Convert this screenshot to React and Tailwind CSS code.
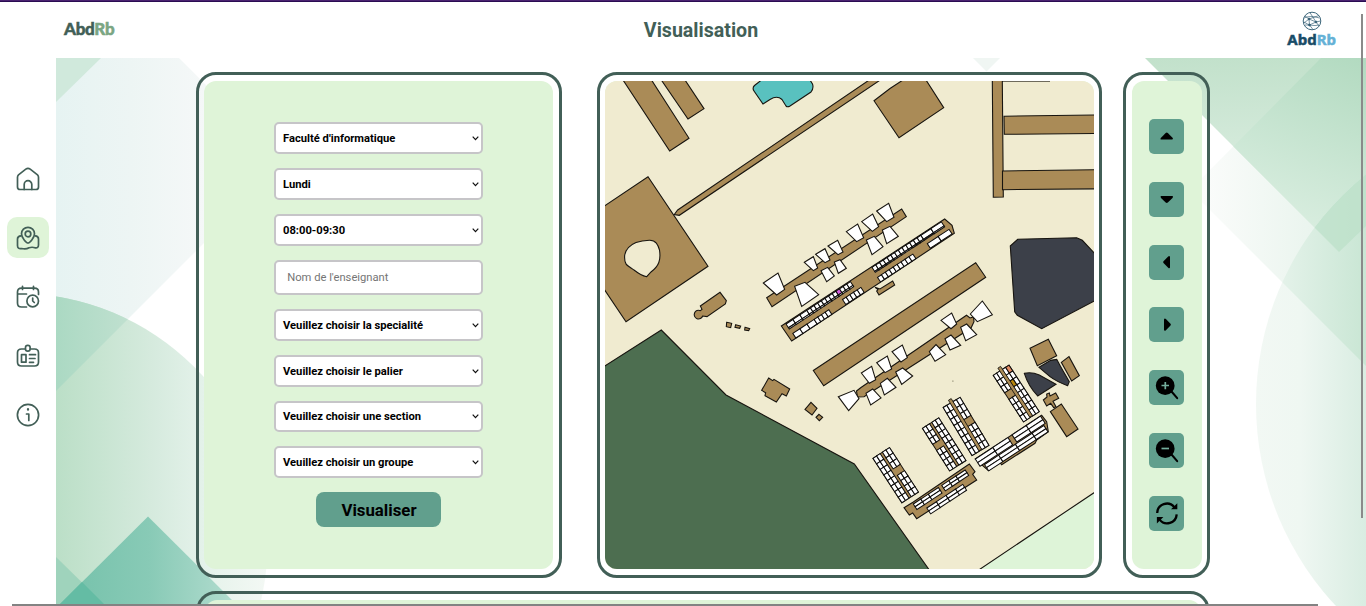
import React from "react";

const BROWN = "#aa8b57";
const INK = "#17140f";

/* ---------- Page backdrop ---------- */
function Backdrop() {
  return (
    <svg className="absolute inset-0 h-full w-full" viewBox="56 58 1310 548" preserveAspectRatio="none">
      <defs>
        <linearGradient id="hex" gradientUnits="userSpaceOnUse" x1="56" x2="205" y1="0" y2="0">
          <stop offset="0" stopColor="#e6f3f2" />
          <stop offset="0.5" stopColor="#edf5f4" />
          <stop offset="1" stopColor="#f5f8f8" />
        </linearGradient>
        <linearGradient id="disc" gradientUnits="userSpaceOnUse" x1="56" x2="266" y1="0" y2="0">
          <stop offset="0" stopColor="#bbdfc7" />
          <stop offset="0.45" stopColor="#d5eadd" />
          <stop offset="0.7" stopColor="#e4f2ea" />
          <stop offset="1" stopColor="#f3f8f4" />
        </linearGradient>
        <linearGradient id="discHex" gradientUnits="userSpaceOnUse" x1="56" x2="126" y1="0" y2="0">
          <stop offset="0" stopColor="#abd9c3" />
          <stop offset="1" stopColor="#bfe0cf" />
        </linearGradient>
        <linearGradient id="peak" gradientUnits="userSpaceOnUse" x1="60" x2="238" y1="0" y2="0">
          <stop offset="0" stopColor="#74c1aa" />
          <stop offset="0.5" stopColor="#88cab6" />
          <stop offset="1" stopColor="#b4ddd0" />
        </linearGradient>
        <linearGradient id="roof" gradientUnits="userSpaceOnUse" x1="0" x2="0" y1="58" y2="252">
          <stop offset="0" stopColor="#c2e1cb" />
          <stop offset="1" stopColor="#e8f4ec" />
        </linearGradient>
        <linearGradient id="roofDark" gradientUnits="userSpaceOnUse" x1="1366" x2="1290" y1="58" y2="240">
          <stop offset="0" stopColor="#b2dac0" />
          <stop offset="1" stopColor="#dcefe2" />
        </linearGradient>
        <linearGradient id="diamond" gradientUnits="userSpaceOnUse" x1="1202" x2="1366" y1="0" y2="0">
          <stop offset="0" stopColor="#fbfcfb" />
          <stop offset="1" stopColor="#e2f1e8" />
        </linearGradient>
        <linearGradient id="moon" gradientUnits="userSpaceOnUse" x1="1256" x2="1366" y1="0" y2="0">
          <stop offset="0" stopColor="#f2f8f4" />
          <stop offset="0.4" stopColor="#eff7f2" />
          <stop offset="1" stopColor="#d9ede2" />
        </linearGradient>
        <linearGradient id="moonDark" gradientUnits="userSpaceOnUse" x1="1275" x2="1366" y1="0" y2="0">
          <stop offset="0" stopColor="#e6f3eb" />
          <stop offset="1" stopColor="#c9e6d4" />
        </linearGradient>
        <clipPath id="hexClip"><path d="M56 58H179L264 143V183L56 391Z" /></clipPath>
        <clipPath id="roofClip"><path d="M1145 58L1339 252L1366 226V58Z" /></clipPath>
        <clipPath id="diamondClip"><path d="M1321 58H1366V366L1202 202V178Z" /></clipPath>
      </defs>
      <path fill="url(#hex)" d="M56 58H179L264 143V183L56 391Z" />
      <path fill="#d0e9dc" d="M56 58H101L56 102Z" />
      <circle fill="url(#disc)" cx="17" cy="544" r="250.5" />
      <circle fill="url(#discHex)" cx="17" cy="544" r="250.5" clipPath="url(#hexClip)" />
      <path fill="#9fd3bc" d="M56 557L106 606H56Z" />
      <path fill="url(#peak)" d="M148 516.500L238 606H58Z" />
      <path fill="#64bca4" d="M82 582L106 606H58Z" />
      <path fill="#f0f6f3" d="M973 58H1000L986.500 71.500Z" />
      <path fill="url(#diamond)" d="M1321 58H1366V366L1202 202V178Z" />
      <path fill="url(#roof)" d="M1145 58L1339 252L1366 226V58Z" />
      <path fill="url(#roofDark)" d="M1321 58H1366V366L1202 202V178Z" clipPath="url(#roofClip)" />
      <circle fill="url(#moon)" cx="1551" cy="404" r="295" />
      <circle fill="url(#moonDark)" cx="1551" cy="404" r="295" clipPath="url(#diamondClip)" />
      <g clipPath="url(#roofClip)">
        <circle fill="#bbdfc8" fillOpacity="0.7" cx="1551" cy="404" r="295" />
      </g>
    </svg>
  );
}

/* ---------- Campus map ---------- */
/* A run of rooms, laid along a building that is turned by `angle`. `widths` lists room widths; a negative one is a gap. */
function Rooms({ x, y, angle = -33.3, widths, heights, marks = {} }) {
  const cells = [];
  let cy = 0;
  heights.forEach((h, r) => {
    if (h < 0) {
      cy -= h;
      return;
    }
    let cx = 0;
    widths.forEach((w, c) => {
      if (w < 0) {
        cx -= w;
        return;
      }
      cells.push(
        <rect key={r + "-" + c} x={cx} y={cy} width={w} height={h} fill={marks[r + "-" + c] || "#fff"} />
      );
      cx += w;
    });
    cy += h;
  });
  return (
    <g transform={`translate(${x} ${y}) rotate(${angle})`} stroke="#0c0b0a" strokeWidth="1">
      {cells}
    </g>
  );
}

const rep = (n, v) => Array(n).fill(v);

function Wing({ x, y, w, h, angle, gapSide, gapAt, stair, marks }) {
  const cw = (w - 2.600) / 4;
  const n = 8;
  const rh = h / n;
  const full = rep(n, rh);
  const gapped = [...rep(gapAt, rh), -rh * 1.150, ...rep(n - gapAt - 1, (h - rh * (gapAt + 1.150)) / (n - gapAt - 1))];
  const a = (angle * Math.PI) / 180;
  const off = cw * 2 + 2.600;
  return (
    <g>
      <rect
        transform={`translate(${x} ${y}) rotate(${angle})`}
        width={w}
        height={h}
        fill={BROWN}
        stroke={INK}
      />
      <Rooms x={x} y={y} angle={angle} widths={[cw, cw]} heights={gapSide === "left" ? gapped : full} />
      <Rooms
        x={x + Math.cos(a) * off}
        y={y + Math.sin(a) * off}
        angle={angle}
        widths={[cw, cw]}
        heights={gapSide === "right" ? gapped : full}
        marks={marks}
      />
      {stair && (
        <rect
          transform={`translate(${x} ${y}) rotate(${angle})`}
          x={cw * 2 - 0.300}
          y={-3.500}
          width={3.200}
          height={h + 3}
          fill={BROWN}
          stroke={INK}
          strokeWidth="0.8"
        />
      )}
    </g>
  );
}

/* Outlines traced on a sheet at three times the map's size. */
const sheetA = [
  "40,279 84,249 104,298 80,315",
  "163,217 190,200 203,234 190,242",
  "197,193 225,176 240,210 225,218",
  "234,168 263,151 279,186 264,194",
  "289,125 323,102 341,143 320,155",
  "335,95 368,72 386,110 367,124",
  "380,63 416,40 432,82 410,95",
  "134,289 165,277 206,314 155,349",
  "213,242 233,232 253,258 230,275",
  "253,216 270,209 289,235 265,250",
  "349,150 373,139 399,170 366,194",
  "397,120 420,109 445,139 410,161",
  "573,391 605,369 620,402 603,416",
  "661,372 697,333 727,374 682,395",
];
const sheetB = [
  "34,159 65,139 77,179 58,190",
  "80,128 112,108 125,147 105,158",
  "126,95 157,75 172,113 153,126",
  "238,95 258,74 287,104 255,124",
  "285,56 303,45 332,76 300,90",
  "332,22 350,12 380,44 347,62",
  "137,156 158,144 188,168 155,193",
  "91,190 112,175 138,202 103,225",
  "48,220 68,207 93,234 62,255",
  "-35,230 12,211 27,236 -4,272",
];

function CampusMap() {
  return (
    <svg className="block h-full w-full" viewBox="605 81 489 488">
      <rect x="605" y="81" width="489" height="488" fill="#f0ebd0" />
      <g stroke={INK} strokeWidth="1.100" fill={BROWN}>
        <path fill="#4d6e50" d="M600 369L661.300 330L726 395L854.300 464L930 571H600Z" />
        <path fill="#def4d8" d="M978 570.500L1100 488.700V580H978Z" />
        <path d="M623 80L669.700 151L689 138.300L651.500 80Z" />
        <path d="M661.300 80L688 119L704 108.700L685 80Z" />
        <path
          fill="#59c1bf"
          d="M761.500 80L754.500 85.500Q752 88 754 91L763 104L770 99.500Q777 95 782 99.500L786 106Q787.500 107.500 790 106L811 92Q814 88 812.500 84L810 80Z"
        />
        <path d="M674.300 214.500L677.700 210L870 79.500L881 79.500L679.300 215.300Z" />
        <path d="M600 209L648 176.700L708 266.300L626 321.700L600 283Z" />
        <path
          fill="#f0ebd0"
          d="M649.300 240.300C656 240 658 245 659.500 250C661 260 659 266 651 272L646.700 276.700C643 276 639 274 634 270C626 265 624 264 624.700 255C626 248 630 245 636 242.500Q642 240.500 649.300 240.300Z"
        />
        <path d="M874 100.700L890 88.500L903 80H926L943.700 107.700L899 137.700Z" />
        <path d="M992.300 79L993.300 197.300L1003.300 197L1002.300 79Z" />
        <path d="M1004 116.200L1097 115V133.500L1004.300 134.300Z" />
        <path d="M1002.500 171L1097 169.700V188.800L1002.500 189.700Z" />
        <path fill="none" strokeOpacity="0.6" d="M1002 81.500H1050" />
        <path
          fill="#3c4049"
          d="M1010.300 246L1017.700 239.300L1076.700 237.700L1082.300 240.300L1098 257V299L1041.700 328.700L1017.300 315.300L1014.700 311.700Z"
        />
        <g transform="translate(596 60) scale(.33333)" strokeWidth="3.300">
          <path d="M313 738L372 697L391 722L388 732L333 770L320 768A13 13 0 1 1 313 752L318 748Z" />
          <path d="M392 787L407 790L404 803L391 800ZM419 794L434 798L431 805L417 802ZM447 802L461 806L458 812L446 810Z" />
        </g>
        <g transform="translate(596 320) scale(.33333)" strokeWidth="3.300">
          <path d="M518 174L530 182L534 178L581 207L571 228L558 221L541 246L507 227L509 218L497 211Z" />
          <path d="M645 247L663 265L648 285L627 268ZM669 283L680 292L670 302L660 292Z" />
        </g>
        <path d="M813.300 370.500L975.700 262.700L985.700 277.300L823.700 385.700Z" />
        <g transform="translate(750 190) scale(.33333)" strokeWidth="3.300">
          <path d="M50 323L455 57L469 80L66 350Z" />
          <path d="M94 408L584 87L606 106L613 130L125 453Z" />
          <path d="M375 292L390 297L428 273L434 285L387 315L380 303L384 299Z" />
        </g>
        <path d="M856.500 391L861 387.500L966.500 315.300L970 318L973.500 317L974 321.700L971 328L864 396.700L857.500 397Z" />
        <g transform="translate(750 190) scale(.33333)" strokeWidth="3.300" fill="#fff">
          {sheetA.map((p) => <polygon key={p} points={p} />)}
        </g>
        <g transform="translate(850 320) scale(.33333)" strokeWidth="3.300" fill="#fff">
          {sheetB.map((p) => <polygon key={p} points={p} />)}
        </g>
        <g transform="translate(850 320) scale(.33333)" strokeWidth="3.300">
          <path d="M540 85L595 58L620 107L562 137Z" />
          <path fill="#3c4049" d="M567 142L602 121L620 118Q634 145 658 185L653 197Q620 185 600 170Z" />
          <path fill="#3c4049" d="M523 160Q545 155 568 165L618 193L563 228Q535 198 523 160Z" />
          <path d="M634 127L657 110L688 167L665 183Z" />
          <path d="M580 240L591 231L590 222L598 219L600 228L617 219L626 235L609 244L618 260L611 263L602 250L590 258Z" />
          <path d="M601 275L634 252L684 327L650 350Z" />
          <path d="M162 563L190 546L358 432L375 455L368 463L380 480L200 596L188 579L178 585Z" />
          <path d="M376 417L575 286L590 305L595 335L560 360L555 370L455 434L450 428L415 452Z" />
          <path stroke="none" fill="#bdb99f" d="M306 181h5v5h-5z" />
        </g>
      </g>

      <Rooms x={786} y={324} widths={[8.300, 8.300, 8.300, ...rep(12, 4.350)]} heights={[4.500, 1.500]} marks={{ "0-11": "#d65fe0" }} />
      <Rooms x={872} y={267.400} widths={[...rep(13, 4.500), 12, 12.500]} heights={[4.800, 1.200]} />
      <Rooms x={792.800} y={333.400} widths={[8.500, 8.500, 8.500, ...rep(4, 4.400)]} heights={[5.500]} />
      <Rooms x={842.500} y={299.500} widths={rep(5, 4.400)} heights={[6]} />
      <Rooms x={877.500} y={277.300} widths={rep(9, 4.700)} heights={[5.500]} />
      <Rooms x={927.300} y={243.600} widths={[13, 13]} heights={[5.500]} />

      <Wing x={873} y={458.300} w={19.700} h={53} angle={-33} gapSide="right" gapAt={3} />
      <Wing x={922.500} y={428.300} w={19.300} h={50.500} angle={-32.500} gapSide="left" gapAt={3} />
      <Wing x={943.200} y={407.500} w={19.700} h={56} angle={-31} gapSide="right" gapAt={3} stair />
      <Wing x={993.300} y={375.300} w={18.700} h={55.500} angle={-33} gapSide="left" gapAt={3} stair marks={{ "0-1": "#e08a62", "2-0": "#b8860b" }} />

      <Rooms x={913.300} y={504} widths={[9, 9, 12, -4, 8.500, 8.500, 11]} heights={[3.300, 3.300]} />
      <Rooms x={926.800} y={508} widths={[11.500, 11.500, 11.500, 8.500]} heights={[3.500, 3.500]} />
      <Rooms x={975.300} y={459} widths={[21, 18, -5, 17, 17]} heights={[4.300, 4.300]} />
      <Rooms x={984.500} y={464.500} widths={[17, 20, 20, 14]} heights={[3.800, 3.800]} />
    </svg>
  );
}

/* ---------- Form ---------- */
function Select({ label, short }) {
  return (
    <div
      className={`flex w-full shrink-0 items-center justify-between rounded-[5px] border-2 border-[#c6c5c8] bg-white pl-[7px] pr-[2px] text-[11.200px] font-bold text-black ${
        short ? "h-[31px]" : "h-[32px]"
      }`}
    >
      <span className="whitespace-nowrap pt-[2px]">{label}</span>
      <svg width="7" height="5" viewBox="0 0 7 5" fill="none" stroke="#111" strokeWidth="1.200">
        <path d="M.7 .7L3.500 3.700L6.300 .7" />
      </svg>
    </div>
  );
}

function FormPanel() {
  return (
    <section className="h-[506px] w-[366px] rounded-[20px] border-[3px] border-[#425f57] py-[6px] pl-[5px] pr-[6px]">
      <div className="flex h-full flex-col items-center rounded-[12px] bg-[#dff4d8] pt-[41px]">
        <div className="flex w-[209px] flex-col gap-[14px]">
          <Select label="Faculté d'informatique" />
          <Select label="Lundi" />
          <Select label="08:00-09:30" />
          <input
            className="h-[35px] w-full rounded-[5px] border-2 border-[#c6c5c8] bg-white px-[11.200px] text-[11.200px] text-black outline-none placeholder:text-[#757575]"
            placeholder="Nom de l'enseignant"
          />
          <Select label="Veuillez choisir la specialité" />
          <Select label="Veuillez choisir le palier" />
          <Select label="Veuillez choisir une section" short />
          <Select label="Veuillez choisir un groupe" />
        </div>
        <button className="mt-[14px] h-[35px] w-[125px] rounded-[8px] bg-[#619f8d] pl-px pt-px text-[16.800px] font-bold leading-none text-black">
          Visualiser
        </button>
      </div>
    </section>
  );
}

/* ---------- Controls ---------- */
const carets = {
  up: "M11.700 20.500H23.300Q24.600 20 23.500 18.700L18.800 13.900Q17.700 13 16.700 13.900L12 18.700Q11 20 11.700 20.500Z",
  down: "M12 14H23.500Q24.600 14.500 23.500 15.900L18.800 20.500Q17.700 21.300 16.700 20.500L12 15.900Q11 14.500 12 14Z",
  left: "M21 12V22.500Q20.600 23.800 19.200 22.700L14.500 18Q13.700 17 14.500 16.200L19.200 11.500Q20.600 10.500 21 12Z",
  right: "M15 12.500V23Q15.500 24.300 16.900 23.200L21.500 18.600Q22.300 17.600 21.500 16.800L16.900 12Q15.500 11 15 12.500Z",
};

function ControlButton({ children, label }) {
  return (
    <button aria-label={label} className="h-[35px] w-[35px] rounded-[5px] bg-[#619f8d]">
      <svg width="35" height="35" viewBox="0 0 35 35">{children}</svg>
    </button>
  );
}

function Lens({ plus }) {
  return (
    <>
      <path d="M22.500 21.500L28.200 28.200" stroke="#000" strokeWidth="2" strokeLinecap="round" />
      <circle cx="16.200" cy="15.700" r="9.400" />
      <path d={plus ? "M12.500 15.500H20M16.300 12V19.200" : "M12.500 15.500H20"} stroke="#74ad9c" strokeWidth="1.700" />
    </>
  );
}

function Controls() {
  return (
    <section className="ml-[21px] h-[506px] w-[87px] rounded-[20px] border-[3px] border-[#425f57] py-[6px] pl-[6px] pr-[5px]">
      <div className="flex h-full w-[70px] flex-col items-start justify-between rounded-[12px] bg-[#dff4d8] py-[38px] pl-[17px]">
        {Object.keys(carets).map((k) => (
          <ControlButton key={k} label={k}><path d={carets[k]} /></ControlButton>
        ))}
        <ControlButton label="zoom in"><Lens plus /></ControlButton>
        <ControlButton label="zoom out"><Lens /></ControlButton>
        <ControlButton label="refresh">
          <g fill="none" stroke="#000" strokeWidth="2.300">
            <path d="M8.200 17A9.600 9.600 0 0 1 25.300 11.200" />
            <path d="M27.700 18.300A9.600 9.600 0 0 1 10.600 23.600" />
          </g>
          <path d="M28.300 7.300V13.300H22Z" />
          <path d="M7.900 27.500V21H14.400Z" />
        </ControlButton>
      </div>
    </section>
  );
}

/* ---------- Sidebar ---------- */
const navIcons = [
  <>
    <path d="M1 9.700Q1 8.300 2 7.300L9.300 1.700Q11.500 0 13.700 1.700L21 7.300Q22 8.300 22 9.700V19.500Q22 22 19.500 22H3.500Q1 22 1 19.500Z" />
    <path d="M7.700 22V17A3.800 3.800 0 0 1 15.300 17V22" />
  </>,
  <>
    <path d="M11.500 16.500C10 16.500 5 11.500 5 7.300A6.500 6.500 0 0 1 18 7.300C18 11.500 13 16.500 11.500 16.500Z" />
    <circle cx="11.500" cy="7.500" r="2.800" />
    <path d="M4.500 9.300Q1 9.500 1 12.500V19Q1 22.700 5 22Q9.500 23.200 12.500 21.200Q16 20.300 18.500 21.300Q22 22 22 18.500V12.500Q22 9.500 18.700 9.300" />
  </>,
  <>
    <path d="M10 21.500H5Q1 21.500 1 17.500V6.500Q1 2.700 5 2.700H18Q22 2.700 22 6.500V9M6 .8V4M17 .8V4M1 8.500H10" />
    <circle cx="16.200" cy="15.500" r="5.800" />
    <path d="M16.200 12.500V15.500L17.800 17" />
  </>,
  <>
    <path d="M8.700 4.500H5Q1 4.500 1 8.300V17.500Q1 21.500 5 21.500H18Q22 21.500 22 17.500V8.300Q22 4.500 18 4.500H14" />
    <rect x="9" y=".9" width="4.600" height="5.800" rx="2.200" />
    <path d="M5 10.200H9.500V17.700H5ZM13 10.200H19M13 14H18.500M13 17.800H17" />
  </>,
  <>
    <circle cx="11.500" cy="11.500" r="10.600" />
    <path d="M10 10.500H12.300V17" />
    <path d="M11.500 5.500V6.200" strokeWidth="2.200" />
  </>,
];

function Sidebar() {
  return (
    <nav className="flex w-[56px] shrink-0 flex-col items-center pt-[100px]">
      {navIcons.map((icon, i) => (
        <a
          key={i}
          className={`mb-[18.200px] flex h-[41px] w-[42px] shrink-0 items-center justify-center rounded-[10px] ${i === 1 ? "bg-[#dff4d8]" : ""}`}
        >
          <svg
            width="24"
            height="24"
            viewBox="-.5 -.5 24 24"
            fill="none"
            stroke="#425f57"
            strokeWidth="1.700"
            strokeLinecap="round"
            strokeLinejoin="round"
          >
            {icon}
          </svg>
        </a>
      ))}
    </nav>
  );
}

function Header() {
  return (
    <header className="grid h-[56px] shrink-0 grid-cols-3 items-center bg-white">
      <div className="pb-[3px] pl-[64px] font-['Lato',sans-serif] text-[17px] font-black leading-none tracking-[-0.300px] text-[#425f57] [-webkit-text-stroke:0.5px]">
        Abd<span className="text-[#7ba683]">Rb</span>
      </div>
      <h1 className="pl-[36px] pt-px text-center text-[19.600px] font-bold leading-none text-[#425f57]">Visualisation</h1>
      <div className="flex flex-col items-center justify-self-end pb-[3px] pr-[30px]">
        <svg className="ml-px" width="20" height="20" viewBox="0 0 20 20" fill="none" stroke="#3d667b" strokeWidth="1">
          <circle cx="10" cy="10" r="8.800" />
          <path d="M3 5L7 8L17 4.500M7 8L2 12M7 8L14 11L18.500 10M14 11L7.500 14L3 14M7 8L7.500 14L11 18.500M14 11L17 15M8 1.700L14 11M2 7Q8 4 17.500 7M2 11Q9 16 17 14" strokeWidth=".7" />
          <circle cx="7" cy="8" r=".9" fill="#174d68" />
          <circle cx="14" cy="11" r=".9" fill="#174d68" />
          <circle cx="7.500" cy="14" r=".9" fill="#174d68" />
        </svg>
        <div className="font-['Noto_Sans',sans-serif] text-[15px] font-bold leading-[16px] text-[#184c67] [-webkit-text-stroke:0.5px]">
          Abd<span className="text-[#64b1d6]">Rb</span>
        </div>
      </div>
    </header>
  );
}

export default function App() {
  return (
    <div className="relative flex h-[606px] w-[1366px] flex-col overflow-hidden bg-white font-['Roboto',sans-serif]">
      <div className="h-[2px] shrink-0 border-b border-[#2a0c52] bg-[#4a2370]" />
      <Header />
      <div className="flex min-h-0 flex-1">
        <Sidebar />
        <main className="relative flex-1 overflow-hidden">
          <Backdrop />
          <div className="relative ml-[140px] flex w-[1014px] flex-col gap-[13px] pt-[14px]">
            <div className="flex">
              <FormPanel />
              <section className="ml-[35px] h-[506px] w-[505px] rounded-[20px] border-[3px] border-[#425f57] px-[5px] py-[6px]">
                <div className="h-full w-[489px] overflow-hidden rounded-[12px] bg-[#dff4d8]">
                  <CampusMap />
                </div>
              </section>
              <Controls />
            </div>
            <section className="h-[300px] rounded-[20px] border-[3px] border-[#425f57] p-[6px]">
              <div className="h-full rounded-[12px] bg-[#dff4d8]" />
            </section>
          </div>
        </main>
      </div>
      <div className="absolute bottom-0 left-[12px] h-[2px] w-[1306px] bg-[#838383]" />
      <div className="absolute left-[1361px] top-[14px] h-[504px] w-[2px] bg-[#8a8a8a]" />
    </div>
  );
}
